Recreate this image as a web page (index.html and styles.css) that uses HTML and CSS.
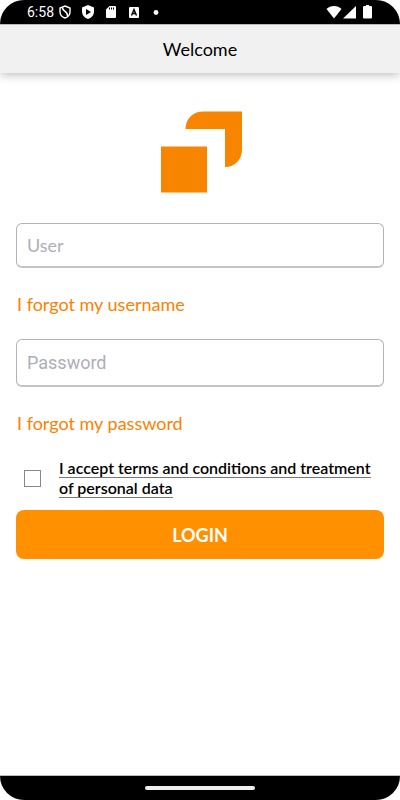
FILE: index.html
```html
<!DOCTYPE html>
<html lang="en">
<head>
  <meta charset="UTF-8">
  <meta name="viewport" content="width=device-width, initial-scale=1.0">
  <title>Welcome</title>
  <link rel="stylesheet" href="styles.css">
</head>
<body>
  <div class="screen">
    <div class="status-bar">
      <span class="time">6:58</span>
      <svg class="icon" width="12" height="14" viewBox="0 0 12 14"><path d="M6 1 11 3v4c0 3-2.200 5-5 6C3.200 12 1 10 1 7V3z" fill="none" stroke="#fff" stroke-width="1.400"/><path d="M3.500 2.500c-.4 4 5.400 3.500 5 8.500" fill="none" stroke="#fff" stroke-width="1.500"/></svg>
      <svg class="icon" width="12" height="14" viewBox="0 0 12 14"><path d="M6 0 12 2.500v4C12 10 9.500 13 6 14 2.500 13 0 10 0 6.500v-4z" fill="#fff"/><path d="M4 4v6l5-3z" fill="#000"/></svg>
      <svg class="icon" width="12" height="14" viewBox="0 0 12 14"><path d="M4.500 1H10q1 0 1 1v10q0 1-1 1H2q-1 0-1-1V4.500z" fill="#fff"/><path d="M4.500 2.500v2M6.500 2.500v2M8.500 2.500v2" stroke="#000"/></svg>
      <svg class="icon" width="12" height="14" viewBox="0 0 12 14"><rect x="1" y="2" width="10" height="11" rx="1" fill="#fff"/><path d="M3.500 10.500 6 4.500l2.500 6M4.500 8.500h3" fill="none" stroke="#000" stroke-width="1.400"/></svg>
      <svg class="icon" width="12" height="14" viewBox="0 0 12 14"><circle cx="5" cy="7.500" r="2.400" fill="#fff"/></svg>
      <div class="signals">
        <svg width="16" height="14" viewBox="0 0 16 14"><path d="M8 13.500.5 4C2.500 2 5 1 8 1s5.500 1 7.500 3z" fill="#fff"/></svg>
        <svg width="13" height="14" viewBox="0 0 13 14"><path d="M13 1v12.500H0z" fill="#fff"/></svg>
        <svg class="battery" width="9" height="14" viewBox="0 0 9 14"><path d="M3 0h3v1h2q1 0 1 1v10.500q0 1-1 1H1q-1 0-1-1V2q0-1 1-1h2z" fill="#fff"/></svg>
      </div>
    </div>

    <header class="header">
      <h1>Welcome</h1>
    </header>

    <main class="content">
      <svg class="logo" width="82" height="82" viewBox="0 0 82 82"><path d="M2 35.500h46V81.500H2z" fill="#f88500"/><path d="M26.500 18C26.500 8 34 .5 44 .5h39v38c0 10-7 17.500-17 17.500V18z" fill="#f88500"/></svg>

      <form class="login" onsubmit="return false">
        <input class="field" type="text" id="user" placeholder="User" aria-label="User">
        <a class="forgot" href="#">I forgot my username</a>
        <input class="field field-password" type="password" id="password" placeholder="Password" aria-label="Password">
        <a class="forgot" href="#">I forgot my password</a>
        <div class="terms">
          <input type="checkbox" id="terms">
          <label for="terms"><span>I accept terms and conditions and treatment of personal data</span></label>
        </div>
        <button class="login-button" type="submit">LOGIN</button>
      </form>
    </main>

    <div class="nav-bar">
      <div class="nav-handle"></div>
    </div>
  </div>
</body>
</html>
```
FILE: styles.css
```css
* { box-sizing: border-box; }
body { margin: 0; background: #fff; font-family: Lato, sans-serif; color: #000; }
.screen { display: flex; flex-direction: column; min-height: 100vh; border-radius: 24px; overflow: hidden; }

.status-bar { display: flex; align-items: center; height: 24px; padding: 0 28px 0 27px; background: #000; color: #fff; font-family: Roboto, sans-serif; font-size: 14px; }
.time { width: 32px; }
.icon { margin-right: 11px; }
.signals { display: flex; margin-left: auto; gap: 1px; }
.battery { margin-left: 6px; }

.header { height: 49px; background: #f1f1f1; border-top: 1px solid #bbb; box-shadow: 0 1px 10px rgba(0, 0, 0, 0.3); text-align: center; }
.header h1 { margin: 0; font-size: 18px; font-weight: 400; line-height: 48px; }

.content { flex: 1; padding: 38px 16px 0; }
.logo { display: block; margin: 0 auto 30px; overflow: visible; }
.login { display: flex; flex-direction: column; }

.field { width: 100%; height: 45px; padding: 0 10px; border: 1px solid #b4b4b8; border-bottom: 2px solid #c4c4c8; border-radius: 6px; background: #fff; font-family: Lato, sans-serif; font-size: 18px; }
.field::placeholder { color: #aeaeb6; opacity: 1; }
.field-password { height: 48px; font-family: Roboto, sans-serif; }
.forgot { align-self: flex-start; margin: 23px 0 22px; padding-left: 1px; color: #ff8000; font-size: 18px; line-height: 26px; text-decoration: none; }

.terms { display: flex; align-items: center; gap: 18px; padding-left: 8px; margin-bottom: 12px; }
.terms input { appearance: none; flex: none; width: 17px; height: 17px; margin: 0; border: 1px solid #888; background: #fff; }
.terms input:checked { background: #ff9000; }
.terms label { font-size: 16px; font-weight: 600; line-height: 20px; }
.terms span { border-bottom: 1px solid #777; }

.login-button { height: 49px; border: none; border-radius: 8px; background: #ff9000; color: #fff; font-family: Lato, sans-serif; font-size: 18px; font-weight: 700; cursor: pointer; }

.nav-bar { display: flex; align-items: center; justify-content: center; height: 25px; border-top: 1px solid #bbb; background: #000; }
.nav-handle { width: 110px; height: 4px; border-radius: 2px; background: #eee; }
```
